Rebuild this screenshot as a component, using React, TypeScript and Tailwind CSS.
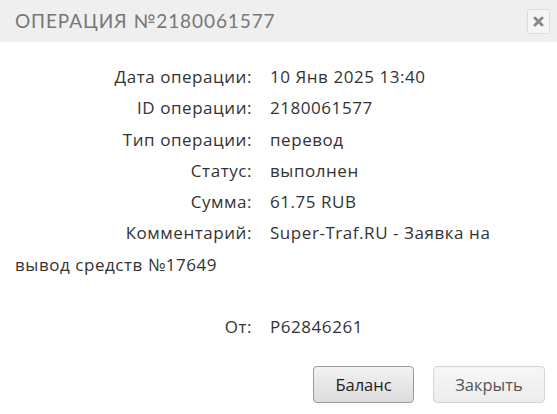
const rows: [string, string][] = [
  ['Дата операции:', '10 Янв 2025 13:40'],
  ['ID операции:', '2180061577'],
  ['Тип операции:', 'перевод'],
  ['Статус:', 'выполнен'],
  ['Сумма:', '61.75 RUB'],
];

export default function App() {
  return (
    <div className="w-[557px] h-[414px] bg-white text-[#333] overflow-hidden" style={{ fontFamily: '"Open Sans", sans-serif' }}>
      {/* Header */}
      <div className="h-[42px] bg-[#efefef] flex items-center justify-between pl-[15px] pr-[7px]">
        <h2 className="text-[19px] tracking-[0.9px] text-[#777] font-normal uppercase" style={{ fontFamily: 'Lato, sans-serif' }}>
          Операция №2180061577
        </h2>
        <button className="w-[23px] h-[25px] rounded-[3px] border border-[#dcdcdc] bg-[#f5f5f5] flex items-center justify-center">
          <svg width="11" height="11" viewBox="0 0 11 11">
            <path d="M2 2 L9 9 M9 2 L2 9" stroke="#8a8a8a" strokeWidth="3" strokeLinecap="round" />
          </svg>
        </button>
      </div>

      {/* Body */}
      <div className="pl-[15px] pr-[40px] pt-[19px] text-[17px] tracking-[0.55px] leading-[31.3px]">
        {rows.map(([label, value]) => (
          <div key={label} className="flex">
            <span className="w-[237px] text-right shrink-0">{label}</span>
            <span className="ml-[18px]">{value}</span>
          </div>
        ))}
        <div>
          <span className="inline-block w-[237px] text-right">Комментарий:</span>
          <span className="ml-[18px]">Super-Traf.RU - Заявка на вывод средств №17649</span>
        </div>
        <div className="h-[31px]" />
        <div className="flex">
          <span className="w-[237px] text-right shrink-0">От:</span>
          <span className="ml-[18px]">P62846261</span>
        </div>
      </div>

      {/* Buttons */}
      <div className="flex justify-end gap-[19px] pr-[12px] mt-[24px]">
        <button className="w-[101px] h-[37px] rounded-[4px] border border-[#9a9a9a] bg-gradient-to-b from-[#f2f2f2] to-[#dcdcdc] text-[#222] text-[16.5px]">
          Баланс
        </button>
        <button className="w-[112px] h-[37px] rounded-[4px] border border-[#d4d4d4] bg-gradient-to-b from-[#f7f7f7] to-[#ececec] text-[#555] text-[16.5px]">
          Закрыть
        </button>
      </div>
    </div>
  );
}
